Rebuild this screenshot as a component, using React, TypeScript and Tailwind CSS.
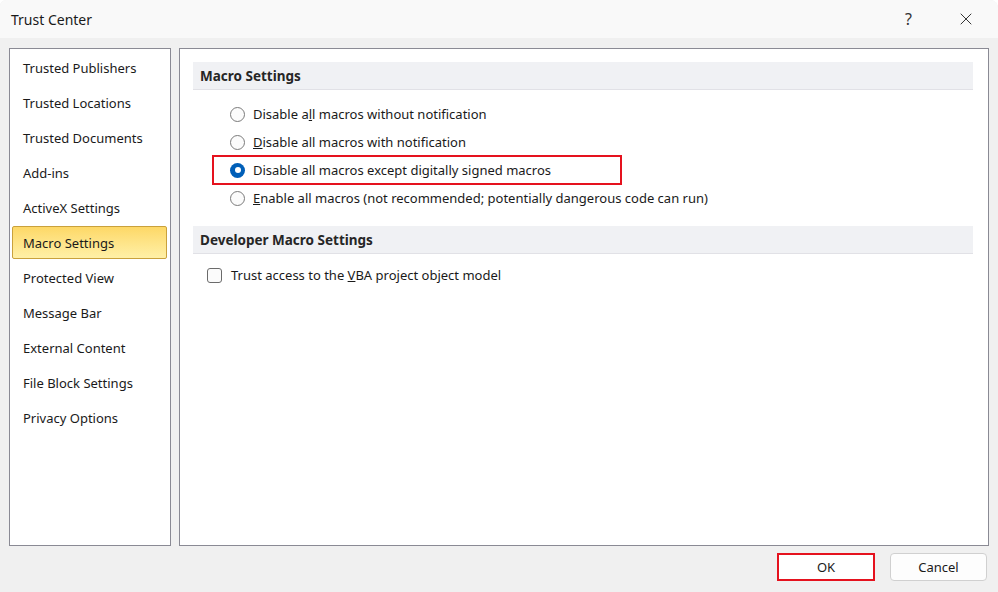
import { X } from "lucide-react"

const navItems = [
  "Trusted Publishers",
  "Trusted Locations",
  "Trusted Documents",
  "Add-ins",
  "ActiveX Settings",
  "Macro Settings",
  "Protected View",
  "Message Bar",
  "External Content",
  "File Block Settings",
  "Privacy Options",
]

const font = { fontFamily: '"Segoe UI", "Noto Sans", "Open Sans", sans-serif' }

function Radio({ checked }: { checked?: boolean }) {
  if (checked) {
    return (
      <span className="flex h-[15px] w-[15px] items-center justify-center rounded-full bg-[#005fb8]">
        <span className="h-[6px] w-[6px] rounded-full bg-white" />
      </span>
    )
  }
  return <span className="h-[15px] w-[15px] rounded-full border border-[#7a7a7a] bg-[#fbfbfb]" />
}

function SectionHeader({ title }: { title: string }) {
  return (
    <div className="flex h-[28px] items-center border-b border-[#e1e1e6] bg-[#f0f1f4] pl-[7px] pt-[1px] text-[13.5px] font-bold text-[#262626]">
      {title}
    </div>
  )
}

export default function App() {
  return (
    <div className="flex h-[592px] w-[998px] flex-col overflow-hidden rounded-tr-[8px] rounded-tl-[6px] bg-[#f0f0f0] text-[#1a1a1a]" style={font}>
      {/* title bar */}
      <div className="flex h-[38px] shrink-0 items-center bg-[#f9f9f9] pl-[11px]">
        <span className="text-[14px] text-[#1a1a1a]">Trust Center</span>
        <div className="ml-auto flex items-center">
          <span className="mr-[44px] text-[16px] text-[#333]">?</span>
          <X className="mr-[22px] h-[20px] w-[20px] text-[#222]" strokeWidth={1.1} />
        </div>
      </div>

      <div className="flex h-[508px] shrink-0 gap-[8px] px-[9px] pt-[10px]">
        {/* nav */}
        <div className="w-[162px] shrink-0 border border-[#8a8a94] bg-white pt-[2px]">
          {navItems.map((item) => (
            <div key={item} className="h-[35px]">
              {item === "Macro Settings" ? (
                <div className="ml-[2px] mr-[3px] flex h-[33px] items-center rounded-[2px] border border-[#c9a13c] bg-gradient-to-b from-[#fdd866] to-[#fff0a6] pl-[10px] pt-[2px] text-[13px]">
                  {item}
                </div>
              ) : (
                <div className="flex h-[33px] items-center pl-[13px] pt-[2px] text-[13px]">{item}</div>
              )}
            </div>
          ))}
        </div>

        {/* content */}
        <div className="flex-1 border border-[#8a8a94] bg-white pl-[13px] pr-[15px] pt-[13px]">
          <SectionHeader title="Macro Settings" />
          <div className="mt-[10px] pl-[37px] text-[13px]">
            <div className="flex h-[28px] items-center gap-[8px]">
              <Radio />
              <span className="pt-[2px]">
                Disable a<u>l</u>l macros without notification
              </span>
            </div>
            <div className="flex h-[28px] items-center gap-[8px]">
              <Radio />
              <span className="pt-[2px]">
                <u>D</u>isable all macros with notification
              </span>
            </div>
            <div className="relative flex h-[28px] items-center gap-[8px]">
              <Radio checked />
              <span className="pt-[2px]">
                Disable all macros except di<u>g</u>itally signed macros
              </span>
              <div className="absolute left-[-18px] top-[-1px] h-[30px] w-[410px] border-2 border-[#e5121e]" />
            </div>
            <div className="flex h-[28px] items-center gap-[8px]">
              <Radio />
              <span className="pt-[2px]">
                <u>E</u>nable all macros (not recommended; potentially dangerous code can run)
              </span>
            </div>
          </div>

          <div className="mt-[14px]">
            <SectionHeader title="Developer Macro Settings" />
          </div>
          <div className="mt-[7px] flex h-[28px] items-center gap-[9px] pl-[14px] text-[13px]">
            <span className="h-[15px] w-[15px] rounded-[3px] border border-[#6b6b6b] bg-[#fbfbfb]" />
            <span className="pt-[2px]">
              Trust access to the <u>V</u>BA project object model
            </span>
          </div>
        </div>
      </div>

      {/* buttons */}
      <div className="mt-[7px] flex justify-end gap-[15px] pr-[11px]">
        <button className="flex h-[28px] w-[98px] items-center justify-center border-2 border-[#e5121e] bg-white pt-[1px] text-[13px] text-[#1a1a1a]">
          OK
        </button>
        <button className="flex h-[28px] w-[97px] items-center justify-center rounded-[4px] border border-[#d0d0d0] bg-[#fdfdfd] pt-[1px] text-[13px] text-[#1a1a1a]">
          Cancel
        </button>
      </div>
    </div>
  )
}
